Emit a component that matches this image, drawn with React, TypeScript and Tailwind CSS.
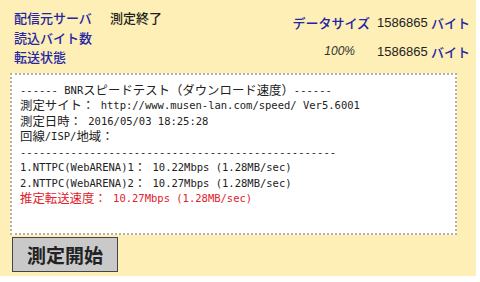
import React from "react";

const jp = "font-['Noto_Sans_CJK_JP',sans-serif]";
const latin = "font-['Liberation_Sans','Noto_Sans_CJK_JP',sans-serif]";

const J: React.FC<{ children: React.ReactNode }> = ({ children }) => (
  <span className={`${jp} inline-block text-[12.4px] leading-[15px]`}>{children}</span>
);

const Line: React.FC<{ children: React.ReactNode; className?: string }> = ({ children, className = "" }) => (
  <div className={`h-[15.5px] leading-[15px] flex items-center ${className}`}>{children}</div>
);

const App: React.FC = () => {
  return (
    <div className="w-[480px] h-[282px] bg-white">
      <div className="w-[476px] h-[276px] bg-[#fdefb5] pt-[8px] pl-[10px]">
        <div className="flex justify-between pr-[4px] text-[13px] leading-[19.5px] font-medium whitespace-nowrap">
          <div className={`${jp} pl-[4px]`}>
            <div className="flex">
              <span className="w-[96px] text-[#2424a6]">配信元サーバ</span>
              <span className="text-[#1e1e1e]">測定終了</span>
            </div>
            <div className="text-[#2424a6]">読込バイト数</div>
            <div className="text-[#2424a6]">転送状態</div>
          </div>
          <div className="grid grid-cols-[88px_61px_41px] items-center">
            <span className={`${jp} text-right text-[#2424a6]`}>データサイズ</span>
            <span className={`${latin} pl-[7px] font-normal text-[#222]`}>1586865</span>
            <span className={`${jp} text-[#2424a6]`}>バイト</span>
            <span className={`${latin} text-right pr-[15px] font-normal italic text-[12px] text-[#333]`}>100%</span>
            <span className={`${latin} pl-[7px] font-normal text-[#222]`}>1586865</span>
            <span className={`${jp} text-[#2424a6]`}>バイト</span>
          </div>
        </div>

        <div className="mt-[6px] w-[447px] h-[162px] bg-white border-2 border-dotted border-[#b8b09a] pl-[8px] pt-[8px] font-['DejaVu_Sans_Mono','Noto_Sans_CJK_JP',monospace] text-[10.5px] text-[#222] whitespace-pre">
          <Line>------ BNR<J>スピードテスト（ダウンロード速度）</J>------</Line>
          <Line><J>測定サイト：</J> http://www.musen-lan.com/speed/ Ver5.6001</Line>
          <Line><J>測定日時：</J> 2016/05/03 18:25:28</Line>
          <Line><J>回線</J>/ISP/<J>地域：</J></Line>
          <Line>--------------------------------------------------</Line>
          <Line>1.NTTPC(WebARENA)1<J>：</J> 10.22Mbps (1.28MB/sec)</Line>
          <Line>2.NTTPC(WebARENA)2<J>：</J> 10.27Mbps (1.28MB/sec)</Line>
          <Line className="text-[#e0222c]"><J>推定転送速度：</J> 10.27Mbps (1.28MB/sec)</Line>
        </div>

        <button className={`${jp} mt-[2px] ml-[2px] w-[106px] h-[35px] bg-[#c9c9c9] border border-[#444] text-[19px] font-bold text-[#222] leading-none`}>
          測定開始
        </button>
      </div>
    </div>
  );
};

export default App;
